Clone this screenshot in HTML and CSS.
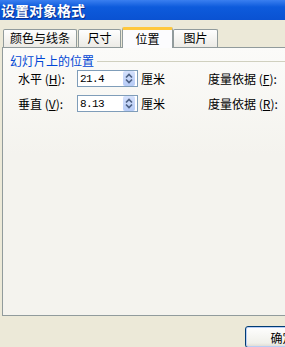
FILE: index.html
```html
<!DOCTYPE html>
<html lang="zh-CN">
<head>
<meta charset="UTF-8">
<meta name="viewport" content="width=device-width, initial-scale=1.0">
<title>设置对象格式</title>
<link rel="stylesheet" href="styles.css">
</head>
<body>
<div class="window">
  <div class="titlebar">设置对象格式</div>

  <div class="tabs">
    <div class="tab tab-lines">颜色与线条</div>
    <div class="tab tab-size">尺寸</div>
    <div class="tab tab-pos active">位置</div>
    <div class="tab tab-pic">图片</div>
  </div>

  <div class="panel">
    <div class="group-title"><span>幻灯片上的位置</span></div>

    <div class="row">
      <span class="row-label">水平 (<u>H</u>):</span>
      <div class="spin">
        <span class="spin-value">21.4</span>
        <span class="spin-btn">
          <svg width="12" height="15" viewBox="0 0 12 15">
            <polyline points="3,6.5 6,3.5 9,6.5" fill="none" stroke="#4d6185" stroke-width="1.7"/>
            <polyline points="3,8.5 6,11.5 9,8.5" fill="none" stroke="#4d6185" stroke-width="1.7"/>
          </svg>
        </span>
      </div>
      <span class="unit">厘米</span>
      <span class="ref">度量依据 (<u>F</u>):</span>
    </div>

    <div class="row">
      <span class="row-label">垂直 (<u>V</u>):</span>
      <div class="spin">
        <span class="spin-value">8.13</span>
        <span class="spin-btn">
          <svg width="12" height="15" viewBox="0 0 12 15">
            <polyline points="3,6.5 6,3.5 9,6.5" fill="none" stroke="#4d6185" stroke-width="1.7"/>
            <polyline points="3,8.5 6,11.5 9,8.5" fill="none" stroke="#4d6185" stroke-width="1.7"/>
          </svg>
        </span>
      </div>
      <span class="unit">厘米</span>
      <span class="ref">度量依据 (<u>R</u>):</span>
    </div>
  </div>

  <div class="footer">
    <button class="btn-ok">确定</button>
  </div>
</div>
</body>
</html>
```

FILE: styles.css
```css
  body {
    margin: 0;
    background-color: #ece9d8;
    font-family: "Noto Sans CJK SC", "DejaVu Sans", sans-serif;
    font-size: 12px;
    color: #000;
}
  .window {
    width: 285px;
    height: 347px;
    overflow: hidden;
}
  .titlebar {
    height: 20px;
    line-height: 20px;
    padding-left: 1px;
    color: #fff;
    font-weight: bold;
    font-size: 14px;
    background: linear-gradient(#3a7ff0, #0d5bdc 35%, #0a52d2);
    text-shadow: 1px 1px 0 #0b2f8a;
}
  .tabs {
    display: flex;
    align-items: flex-end;
    height: 20px;
    margin-top: 7px;
    padding-left: 3px;
}
  .tab {
    box-sizing: border-box;
    height: 18px;
    line-height: 16px;
    text-align: center;
    border: 1px solid #919b9c;
    border-bottom: none;
    border-radius: 2px 2px 0 0;
    background: linear-gradient(#fefefe, #ecebe6);
}
  .tab-lines { width: 74px; }
  .tab-size { width: 43px; margin-left: 1px; }
  .tab-pic { width: 45px; }
  .tab.active {
    width: 51px;
    height: 21px;
    line-height: 18px;
    margin-left: 1px;
    margin-bottom: -1px;
    position: relative;
    background: #fcfcfe;
    border-top: 3px solid #ffc83c;
}
  .panel {
    box-sizing: border-box;
    width: 300px;
    height: 269px;
    margin-left: 2px;
    border: 1px solid #919b9c;
    background: linear-gradient(#fbfbf9, #f4f3ee 40%);
}
  .group-title {
    display: flex;
    align-items: center;
    margin-top: 6px;
    padding-left: 7px;
    line-height: 14px;
    color: #0046d5;
}
  .group-title::after {
    content: "";
    flex: 1;
    margin-left: 3px;
    border-top: 1px solid #d0d0bf;
}
  .row {
    display: flex;
    align-items: center;
    height: 17px;
    margin-top: 8px;
    padding-left: 15px;
}
  .group-title + .row {
    margin-top: 2px;
}
  .row-label {
    width: 59px;
    white-space: nowrap;
}
  .spin {
    box-sizing: border-box;
    display: flex;
    align-items: center;
    width: 61px;
    height: 17px;
    border: 1px solid #7f9db9;
    background: #fff;
}
  .spin-value {
    flex: 1;
    padding-left: 2px;
    font-family: "Liberation Mono", monospace;
    font-size: 11px;
    letter-spacing: -0.6px;
}
  .spin-btn {
    display: flex;
    width: 12px;
    height: 15px;
    margin-right: 2px;
    background: linear-gradient(#d4e0fb, #b6cbf6);
    border-radius: 2px;
}
  .unit {
    margin-left: 3px;
    width: 24px;
}
  .ref {
    margin-left: 43px;
    white-space: nowrap;
}
  .footer {
    padding: 10px 0 0 245px;
}
  .btn-ok {
    width: 75px;
    height: 22px;
    padding: 0;
    font-family: inherit;
    font-size: 12px;
    border: 1px solid #003c74;
    border-radius: 3px;
    background: linear-gradient(#fefefe, #f0f0ea 80%, #dcdad0);
    box-shadow: inset 0 0 0 1px #b8cdf5;
}
```
